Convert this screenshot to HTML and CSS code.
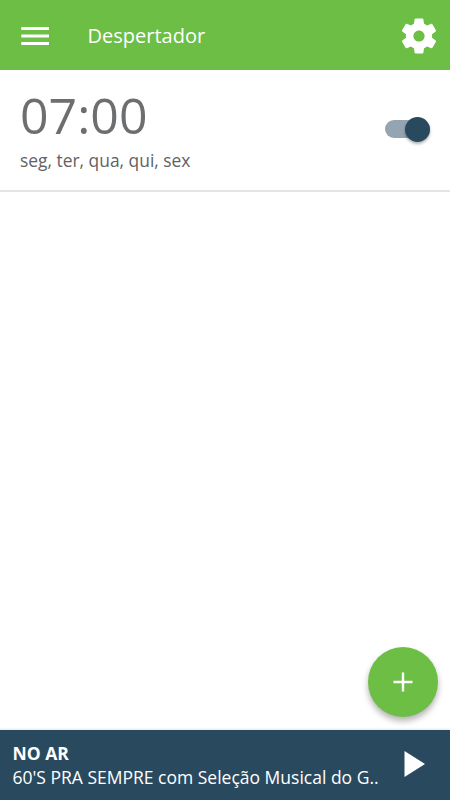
FILE: index.html
```html
<!DOCTYPE html>
<html lang="pt-BR">
<head>
    <meta charset="UTF-8">
    <meta name="viewport" content="width=device-width, initial-scale=1.0">
    <title>Despertador</title>
    <link rel="stylesheet" href="styles.css">
</head>
<body>
    <header class="toolbar">
        <button class="icon-button menu" aria-label="Menu">
            <svg width="28" height="20" viewBox="0 0 28 20"><path d="M.3 1H28v3H.3zM.3 8.5H28v3H.3zM.3 16H28v3H.3z"/></svg>
        </button>
        <h1>Despertador</h1>
        <button class="icon-button settings" aria-label="Configurações">
            <svg width="42" height="42" viewBox="0 0 24 24"><path d="M19.43 12.98c.04-.32.07-.64.07-.98s-.03-.66-.07-.98l2.11-1.65c.19-.15.24-.42.12-.64l-2-3.46c-.12-.22-.39-.3-.61-.22l-2.49 1c-.52-.4-1.08-.73-1.69-.98l-.38-2.65C14.46 2.18 14.25 2 14 2h-4c-.25 0-.46.18-.49.42l-.38 2.65c-.61.25-1.17.59-1.69.98l-2.49-1c-.23-.09-.49 0-.61.22l-2 3.46c-.13.22-.07.49.12.64l2.11 1.65c-.04.32-.07.65-.07.98s.03.66.07.98l-2.11 1.65c-.19.15-.24.42-.12.64l2 3.46c.12.22.39.3.61.22l2.49-1c.52.4 1.08.73 1.69.98l.38 2.65c.03.24.24.42.49.42h4c.25 0 .46-.18.49-.42l.38-2.65c.61-.25 1.17-.59 1.69-.98l2.49 1c.23.09.49 0 .61-.22l2-3.46c.12-.22.07-.49-.12-.64l-2.11-1.65zM12 15.2c-1.77 0-3.2-1.43-3.2-3.2s1.43-3.2 3.2-3.2 3.2 1.43 3.2 3.2-1.43 3.2-3.2 3.2z"/></svg>
        </button>
    </header>

    <main class="alarms">
        <div class="alarm">
            <div class="alarm-info">
                <div class="alarm-time">07:00</div>
                <div class="alarm-days">seg, ter, qua, qui, sex</div>
            </div>
            <div class="switch" role="switch" aria-checked="true"><span class="thumb"></span></div>
        </div>
    </main>

    <button class="fab" aria-label="Adicionar">
        <svg width="20" height="20" viewBox="0 0 20 20"><path d="M8.8.5h2.4v8.3h8.3v2.4h-8.3v8.3H8.8v-8.3H.5V8.8h8.3z"/></svg>
    </button>

    <footer class="player">
        <div class="player-info">
            <div class="player-label">NO AR</div>
            <div class="player-title">60'S PRA SEMPRE com Seleção Musical do G..</div>
        </div>
        <button class="icon-button play" aria-label="Tocar">
            <svg width="21" height="26" viewBox="0 0 21 26"><path d="M.5 0L21 13 .5 26z"/></svg>
        </button>
    </footer>
</body>
</html>
```
FILE: styles.css
```css
* {
    box-sizing: border-box;
}
body {
    margin: 0;
    height: 100vh;
    display: flex;
    flex-direction: column;
    background-color: #fff;
    font-family: "Open Sans", "Noto Sans", sans-serif;
    overflow: hidden;
}
.toolbar {
    height: 70px;
    flex-shrink: 0;
    display: flex;
    align-items: center;
    padding: 2px 10px 0 21px;
    background-color: #6cbe45;
    color: #fff;
}
.toolbar h1 {
    flex: 1;
    margin: 0 0 0 38.5px;
    padding-bottom: 2px;
    font-size: 20px;
    font-weight: 400;
}
.icon-button {
    display: flex;
    padding: 0;
    border: none;
    background: none;
    cursor: pointer;
}
svg {
    display: block;
    fill: #fff;
}

/* Alarm list */
.alarms {
    flex: 1;
}
.alarm {
    height: 122px;
    display: flex;
    align-items: center;
    justify-content: space-between;
    padding: 0 20px 2px;
    border-bottom: 2px solid #e4e4e4;
}
.alarm-info {
    padding-top: 2px;
}
.alarm-time {
    font-size: 50px;
    line-height: 54px;
    color: #6d6e70;
}
.alarm-days {
    margin-top: 6px;
    font-size: 17.4px;
    line-height: 24px;
    color: #626262;
}
.switch {
    display: flex;
    justify-content: flex-end;
    align-items: center;
    width: 45px;
    height: 18px;
    border-radius: 9px;
    background-color: #94a4b0;
}
.thumb {
    width: 25px;
    height: 25px;
    border-radius: 50%;
    background-color: #29495f;
    box-shadow: 0 2px 3px rgba(0, 0, 0, 0.3);
}

/* Floating add button */
.fab {
    position: absolute;
    right: 12.5px;
    bottom: 83px;
    width: 70px;
    height: 70px;
    display: flex;
    align-items: center;
    justify-content: center;
    padding: 0;
    border: none;
    border-radius: 50%;
    background-color: #6cbe45;
    box-shadow: 0 4px 6px rgba(0, 0, 0, 0.3);
}

/* Player bar */
.player {
    height: 70px;
    flex-shrink: 0;
    display: flex;
    align-items: center;
    justify-content: space-between;
    padding: 0 25px 0 12.5px;
    background-color: #29495f;
    box-shadow: 0 -1px 2px rgba(0, 0, 0, 0.1);
    color: #fff;
}
.player-info {
    padding-bottom: 1px;
    font-size: 17.5px;
    line-height: 24px;
    white-space: nowrap;
}
.player-label {
    font-weight: 700;
}
.play {
    padding-bottom: 2px;
}
```
